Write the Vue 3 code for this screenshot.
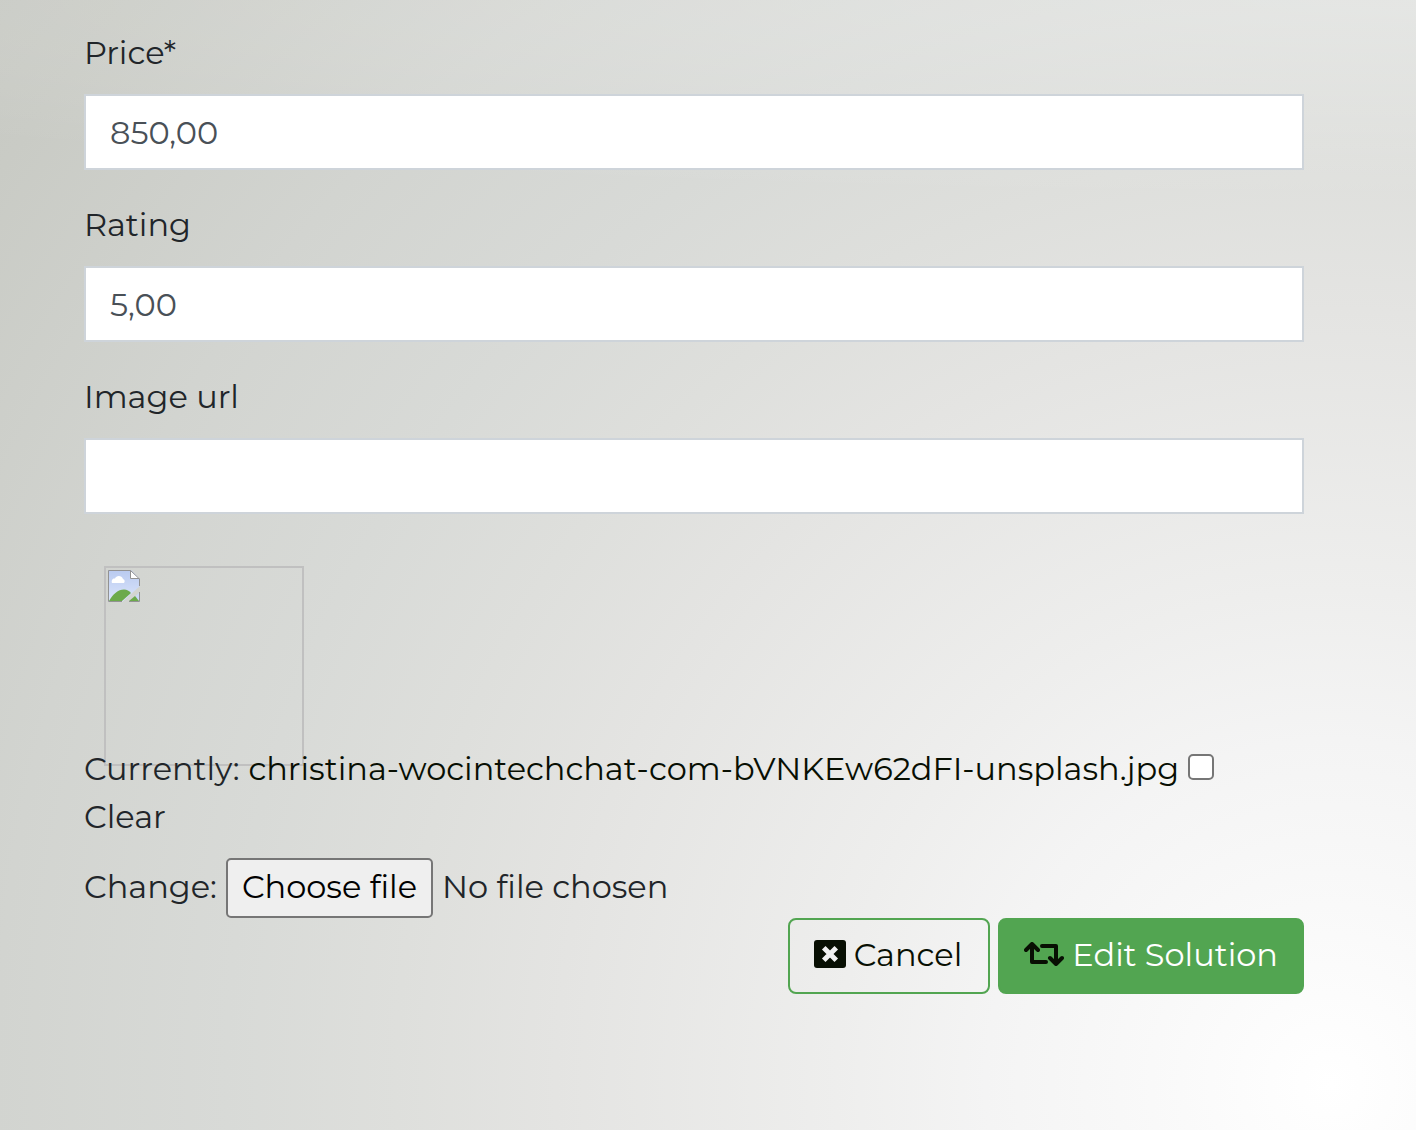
<script setup>
import { ref } from 'vue'

const fields = ref([
  { id: 'price', label: 'Price*', value: '850,00' },
  { id: 'rating', label: 'Rating', value: '5,00' },
  { id: 'image-url', label: 'Image url', value: '' },
])
const clearImage = ref(false)
</script>

<template>
  <main class="page">
    <form class="form" @submit.prevent>
      <div v-for="field in fields" :key="field.id" class="group">
        <label :for="field.id">{{ field.label }}</label>
        <input :id="field.id" v-model="field.value" class="control" type="text" />
      </div>

      <div class="preview">
        <div class="frame">
          <svg width="32" height="32" viewBox="0 0 32 32" aria-hidden="true">
            <defs>
              <linearGradient id="sky" x1="0" y1="0" x2="0" y2="1">
                <stop offset="0" stop-color="#b9caf0" />
                <stop offset="1" stop-color="#dce6fc" />
              </linearGradient>
            </defs>
            <path d="M0 0H23L32 9V16L14 32H0Z" fill="url(#sky)" />
            <path d="M32 22V32H21Z" fill="#cbd9f5" />
            <path d="M1 31C5 24 10 19.500 16 19.500C19 19.500 21 21 23 23L14 31Z" fill="#6caa4b" />
            <path d="M27 26L31 31H21Z" fill="#6caa4b" />
            <path d="M4 13C3 10 5 8 7 8.500C8 5 14 5 15 9C17 9.500 17 12 16 13Z" fill="#fff" />
            <path d="M22.500 .500V8.500H31.500Z" fill="#fff" />
            <path d="M14 31.500H.500V.500H22.500L31.500 9V16M22.500 .500V8.500H31.500M31.500 22V31.500H21" fill="none" stroke="#929292" />
          </svg>
        </div>
      </div>

      <div class="line current">
        <span>Currently:</span>
        <a href="#">christina-wocintechchat-com-bVNKEw62dFI-unsplash.jpg</a>
        <input id="clear" v-model="clearImage" class="check" type="checkbox" />
      </div>
      <label class="clear" for="clear">Clear</label>

      <div class="line upload">
        <span>Change:</span>
        <input id="file" class="file" type="file" aria-label="Change" />
        <label class="choose" for="file">Choose file</label>
        <span>No file chosen</span>
      </div>

      <div class="actions">
        <button class="btn outline" type="button">
          <svg width="32" height="28" viewBox="0 0 32 28" aria-hidden="true">
            <rect width="32" height="28" rx="3" fill="#080f03" />
            <path d="M11.500 9.500L20.500 18.500M20.500 9.500L11.500 18.500" stroke="#f1f1f1" stroke-width="5" stroke-linecap="square" fill="none" />
          </svg>
          <span>Cancel</span>
        </button>
        <button class="btn solid" type="submit">
          <svg width="40" height="24" viewBox="0 0 40 24" fill="none" stroke="#080f03" stroke-width="4" stroke-linecap="round" stroke-linejoin="round" aria-hidden="true">
            <path d="M2 8L8 2L14 8M8 3V20H22M18 4H32V21M26 16L32 22L38 16" />
          </svg>
          <span>Edit Solution</span>
        </button>
      </div>
    </form>
  </main>
</template>

<style>
body {
  margin: 0;
}
</style>

<style scoped>
.page {
  box-sizing: border-box;
  min-height: 100vh;
  padding: 29px 112px 136px 84px;
  background:
    radial-gradient(2000px 200px at 100% 0, rgba(255, 255, 255, 0.32), rgba(255, 255, 255, 0)),
    radial-gradient(
      circle at 94% 96%,
      #ffffff 0,
      #f9f9f9 180px,
      #f4f4f4 345px,
      #eeeeed 495px,
      #e4e4e2 775px,
      #dedfdc 935px,
      #d8dad7 1105px,
      #d2d4d0 1335px,
      #c9cbc5 1615px,
      #c6c8c2 1740px
    );
  color: #212529;
  font-family: Montserrat, Inter, "Liberation Sans", sans-serif;
  font-size: 32px;
  line-height: 48px;
}

.group {
  display: flex;
  flex-direction: column;
  gap: 17px;
  margin-bottom: 31px;
}

.control {
  box-sizing: border-box;
  width: 100%;
  height: 76px;
  padding: 12px 24px;
  border: 2px solid #ced4da;
  border-radius: 0;
  background: #fff;
  color: #495057;
  font: inherit;
}

.preview {
  height: 200px;
  padding: 21px 0 0 20px;
  box-sizing: border-box;
}

.frame {
  box-sizing: border-box;
  display: flex;
  align-items: flex-start;
  width: 200px;
  height: 200px;
  padding: 2px;
  border: 2px solid #c0c0c0;
}

.line {
  position: relative;
  display: flex;
  align-items: center;
  gap: 9px;
  white-space: nowrap;
}

.line a {
  color: #080f03;
  text-decoration: none;
}

.check {
  appearance: none;
  box-sizing: border-box;
  width: 26px;
  height: 26px;
  margin: 0 0 4px;
  border: 2px solid #767676;
  border-radius: 5px;
  background: #fff;
}

.clear {
  display: block;
  margin-bottom: 17px;
}

.upload {
  align-items: baseline;
  font-variant-ligatures: none;
}

.file {
  position: absolute;
  width: 1px;
  height: 1px;
  opacity: 0;
}

.choose {
  box-sizing: border-box;
  height: 60px;
  padding: 3px 14px;
  border: 2px solid #767676;
  border-radius: 5px;
  background: #efefef;
  color: #000;
}

.actions {
  display: flex;
  justify-content: flex-end;
  gap: 8px;
}

.btn {
  box-sizing: border-box;
  display: flex;
  align-items: center;
  gap: 8px;
  height: 76px;
  padding: 0 24px 2px;
  border: 2px solid #52a551;
  border-radius: 8px;
  font: inherit;
}

.btn svg {
  margin-bottom: 2px;
}

.outline {
  padding-right: 26px;
  background: transparent;
  color: #080f03;
}

.solid {
  background: #52a551;
  color: #fff;
}
</style>
